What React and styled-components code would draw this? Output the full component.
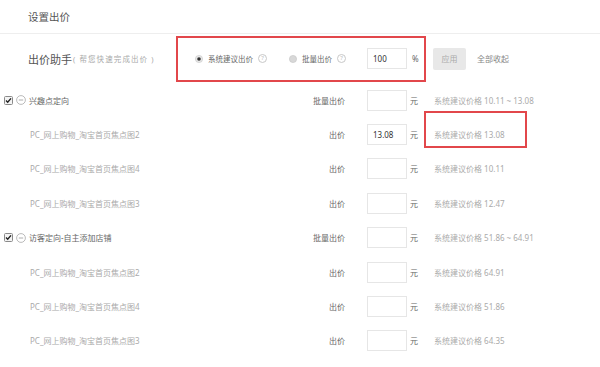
import React from 'react';
import styled, { createGlobalStyle } from 'styled-components';

const GlobalStyle = createGlobalStyle`
  body {
    margin: 0;
    background: #fff;
    font-family: "Noto Sans", "Noto Sans CJK SC", sans-serif;
  }
`;

const groups = [
  {
    name: '兴趣点定向',
    range: '10.11 ~ 13.08',
    items: [
      { name: 'PC_网上购物_淘宝首页焦点图2', value: '13.08', price: '13.08', marked: true },
      { name: 'PC_网上购物_淘宝首页焦点图4', value: '', price: '10.11' },
      { name: 'PC_网上购物_淘宝首页焦点图3', value: '', price: '12.47' },
    ],
  },
  {
    name: '访客定向-自主添加店铺',
    range: '51.86 ~ 64.91',
    items: [
      { name: 'PC_网上购物_淘宝首页焦点图2', value: '', price: '64.91' },
      { name: 'PC_网上购物_淘宝首页焦点图4', value: '', price: '51.86' },
      { name: 'PC_网上购物_淘宝首页焦点图3', value: '', price: '64.35' },
    ],
  },
];

const Checkbox = () => (
  <svg width="9" height="9" viewBox="0 0 9 9">
    <rect x="0.5" y="0.5" width="8" height="8" rx="1" fill="#f4f4f4" stroke="#8a8a8a" />
    <path d="M2 4.6 L3.7 6.3 L7 2.4" fill="none" stroke="#222" strokeWidth="1.4" />
  </svg>
);

const Collapse = () => (
  <svg width="10" height="10" viewBox="0 0 10 10">
    <circle cx="5" cy="5" r="4.4" fill="#fff" stroke="#aaa" strokeWidth="0.8" />
    <path d="M2.8 5 H7.2" stroke="#999" strokeWidth="0.8" />
  </svg>
);

const Radio = ({ checked }) => (
  <svg width="8" height="8" viewBox="0 0 8 8">
    <circle cx="4" cy="4" r="3.6" fill={checked ? '#e9e9e9' : '#d8d8d8'} stroke="#c4c4c4" strokeWidth="0.6" />
    {checked && <circle cx="4" cy="4" r="1.8" fill="#333" />}
  </svg>
);

const Page = styled.div`
  width: 600px;
  color: #666;
`;

const TitleBar = styled.div`
  height: 33px;
  display: flex;
  align-items: center;
  padding-left: 28px;
  border-bottom: 1px solid #eeeeee;
  font-size: 10.5px;
  color: #555;
`;

const AssistBar = styled.div`
  height: 49px;
  display: flex;
  align-items: center;
  padding-left: 28px;
  & > * { flex-shrink: 0; }
`;

const AssistTitle = styled.span`
  font-size: 11px;
  width: 44px;
  white-space: nowrap;
  color: #555;
`;

const AssistHint = styled.span`
  font-size: 7.5px;
  letter-spacing: 1.1px;
  color: #aaa;
  margin-left: 1px;
  width: 74px;
  white-space: nowrap;
`;

const MarkBox = styled.div`
  display: flex;
  align-items: center;
  height: 46px;
  box-sizing: border-box;
  border: 2px solid #e2474b;
  margin-left: 29px;
  padding: 0 6px 0 17px;
  & > * { flex-shrink: 0; }
`;

const Option = styled.label`
  display: flex;
  align-items: center;
  font-size: 7.5px;
  color: #666;
  margin-right: ${({ gap }) => gap}px;
  svg { margin-right: 5px; }
`;

const Help = styled.span`
  width: 7px;
  height: 7px;
  border: 1px solid #c8c8c8;
  border-radius: 50%;
  color: #bbb;
  font-size: 6px;
  line-height: 7px;
  text-align: center;
  margin-left: 5px;
`;

const Field = styled.div`
  flex-shrink: 0;
  width: 40px;
  height: 21px;
  box-sizing: border-box;
  border: 1px solid #e6e6e6;
  background: #fff;
  font-size: 8px;
  color: #333;
  display: flex;
  align-items: center;
  padding-left: 5px;
`;

const Unit = styled.span`
  flex-shrink: 0;
  width: 6px;
  font-size: 8px;
  color: #666;
  margin-left: ${({ gap }) => gap}px;
`;

const ApplyButton = styled.button`
  width: 33px;
  height: 22px;
  border: none;
  border-radius: 2px;
  background: #e8e8e8;
  color: #aaa;
  font-family: inherit;
  font-size: 8px;
  margin-left: 7px;
  padding: 0;
`;

const Link = styled.span`
  font-size: 8px;
  color: #888;
  margin-left: 11px;
`;

const Row = styled.div`
  height: 34.4px;
  display: flex;
  align-items: center;
`;

const NameCell = styled.div`
  flex: 0 0 ${({ child }) => (child ? 255 : 281)}px;
  padding-left: ${({ child }) => (child ? 30 : 4)}px;
  display: flex;
  align-items: center;
  font-size: 8px;
  color: ${({ child }) => (child ? '#aaa' : '#666')};
  svg { margin-right: 3px; }
`;

const Label = styled.div`
  width: 60px;
  text-align: right;
  font-size: 8px;
  color: #666;
  margin-right: 22px;
`;

const Suggest = styled.div`
  position: relative;
  margin-left: 18px;
  font-size: 8px;
  color: #aaa;
`;

const Mark = styled.div`
  position: absolute;
  left: -10px;
  top: -18px;
  width: 103px;
  height: 37px;
  box-sizing: border-box;
  border: 2px solid #e2474b;
`;

const PriceRow = ({ child, name, label, value, text, marked }) => (
  <Row>
    <NameCell child={child}>
      {!child && <Checkbox />}
      {!child && <Collapse />}
      {name}
    </NameCell>
    <Label>{label}</Label>
    <Field>{value}</Field>
    <Unit gap={3}>元</Unit>
    <Suggest>
      系统建议价格 {text}
      {marked && <Mark />}
    </Suggest>
  </Row>
);

export default function App() {
  return (
    <Page>
      <GlobalStyle />
      <TitleBar>设置出价</TitleBar>
      <AssistBar>
        <AssistTitle>出价助手</AssistTitle>
        <AssistHint>( 帮您快速完成出价 )</AssistHint>
        <MarkBox>
          <Option gap={22}>
            <Radio checked />
            系统建议出价
            <Help>?</Help>
          </Option>
          <Option gap={21}>
            <Radio />
            批量出价
            <Help>?</Help>
          </Option>
          <Field>100</Field>
          <Unit gap={5}>%</Unit>
        </MarkBox>
        <ApplyButton>应用</ApplyButton>
        <Link>全部收起</Link>
      </AssistBar>
      {groups.map((g) => (
        <React.Fragment key={g.name}>
          <PriceRow name={g.name} label="批量出价" value="" text={g.range} />
          {g.items.map((it, i) => (
            <PriceRow
              key={i}
              child
              name={it.name}
              label="出价"
              value={it.value}
              text={it.price}
              marked={it.marked}
            />
          ))}
        </React.Fragment>
      ))}
    </Page>
  );
}
